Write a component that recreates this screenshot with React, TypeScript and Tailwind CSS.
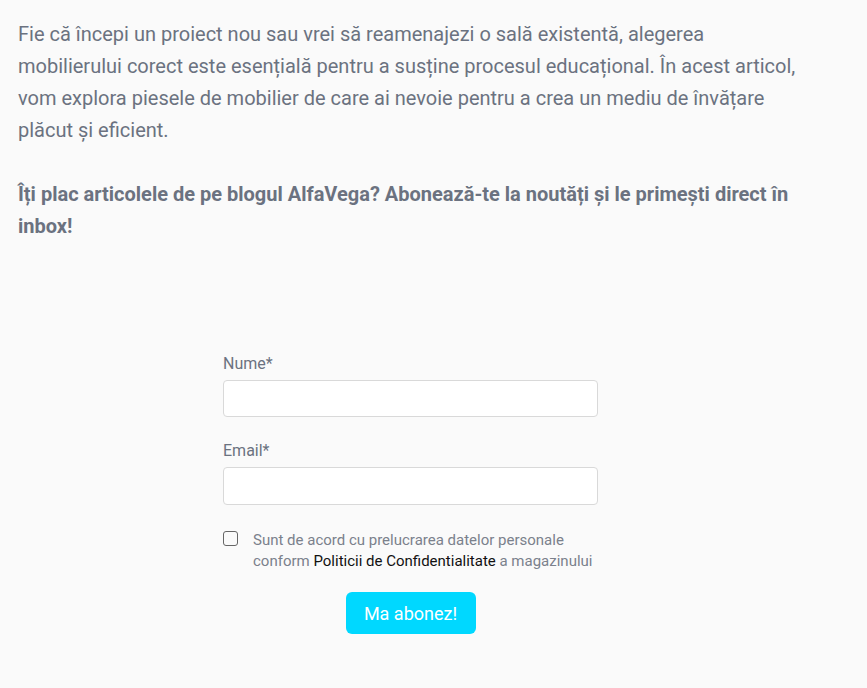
import React from "react";

export default function App() {
  return (
    <div className="min-h-[688px] w-full bg-[#fafafa] font-['Roboto',sans-serif] text-[#6b7280]">
      <div className="px-[18px] pt-[18px]">
        <p className="w-[788px] text-[20px] leading-[32px]">
          Fie că începi un proiect nou sau vrei să reamenajezi o sală existentă, alegerea mobilierului corect este esențială pentru a susține procesul educațional. În acest articol, vom explora piesele de mobilier de care ai nevoie pentru a crea un mediu de învățare plăcut și eficient.
        </p>
        <p className="mt-[32px] w-[788px] text-[20px] font-bold leading-[32px]">
          Îți plac articolele de pe blogul AlfaVega? Abonează-te la noutăți și le primești direct în inbox!
        </p>
      </div>
      <form className="ml-[223px] mt-[110px] flex w-[375px] flex-col">
        <label className="text-[16px] leading-[24px]">Nume*</label>
        <input className="mt-[4px] h-[37px] rounded-[4px] border border-[#d9d9d9] bg-white px-3 outline-none" />
        <label className="mt-[22px] text-[16px] leading-[24px]">Email*</label>
        <input className="mt-[4px] h-[38px] rounded-[4px] border border-[#d9d9d9] bg-white px-3 outline-none" />
        <div className="mt-[25px] flex items-start gap-[15px]">
          <span className="mt-[1px] h-[15px] w-[15px] shrink-0 rounded-[3px] border-[1.5px] border-[#666]"></span>
          <p className="text-[15px] leading-[21px] text-[#7b818c]">
            Sunt de acord cu prelucrarea datelor personale conform{" "}
            <span className="text-[#111]">Politicii de Confidentialitate</span> a magazinului
          </p>
        </div>
        <div className="mt-[20px] flex justify-center">
          <button type="button" className="h-[42px] w-[130px] rounded-[6px] bg-[#00d8ff] text-[18px] text-white">
            Ma abonez!
          </button>
        </div>
      </form>
    </div>
  );
}
